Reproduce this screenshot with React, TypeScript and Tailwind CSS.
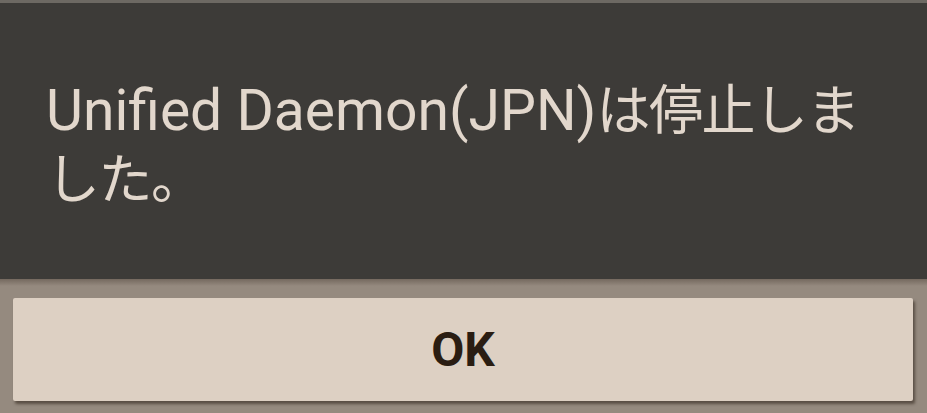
export default function App() {
  return (
    <div
      className="w-[927px] h-[413px] flex flex-col overflow-hidden bg-[#958a7f]"
      style={{ fontFamily: 'Roboto, "Noto Sans CJK JP", sans-serif' }}
    >
      {/* message panel */}
      <div className="h-[279px] shrink-0 border-t-[3px] border-[#6d6963] bg-[#3d3b38] pl-[46px] pr-[40px] pt-[74px]">
        <p className="text-[57px] leading-[68px] text-[#e2d7cc]">
          Unified Daemon(JPN)
          <span className="text-[54px] tracking-[-1.5px]">は停止しました。</span>
        </p>
      </div>

      {/* button area */}
      <div className="flex-1 px-[13px] pt-[19px] bg-gradient-to-b from-[#75695f] via-[#958a7f] to-[#958a7f] bg-[length:100%_14px] bg-no-repeat">
        <button className="w-[900px] h-[103px] bg-[#ddd0c3] rounded-[2px] shadow-[2px_3px_3px_rgba(40,30,20,0.55)] flex items-center justify-center">
          <span className="text-[48px] font-bold text-[#2a1d12] leading-none">OK</span>
        </button>
      </div>
    </div>
  );
}
